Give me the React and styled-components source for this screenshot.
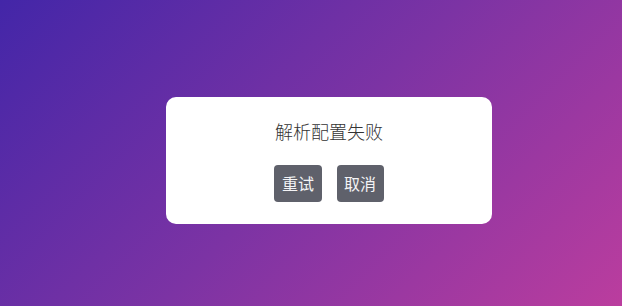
import React from 'react'
import styled, { createGlobalStyle } from 'styled-components'

const GlobalStyle = createGlobalStyle`
  html, body {
    margin: 0;
    padding: 0;
    height: 100%;
  }
  body {
    font-family: "Noto Sans CJK SC", "Noto Sans", sans-serif;
  }
  #root {
    height: 100%;
  }
`

const Backdrop = styled.div`
  box-sizing: border-box;
  width: 100%;
  height: 306px;
  display: flex;
  align-items: center;
  justify-content: center;
  padding: 15px 0 0 36px;
  background: linear-gradient(135deg, #4326a8 0%, #7c33a4 50%, #bb3d9e 100%);
`

const Dialog = styled.div`
  box-sizing: border-box;
  width: 326px;
  padding: 22px 0;
  background: #fff;
  border-radius: 10px;
  display: flex;
  flex-direction: column;
  align-items: center;
`

const Message = styled.div`
  font-size: 18px;
  font-weight: 300;
  line-height: 24px;
  color: #333;
  margin-bottom: 22px;
`

const Actions = styled.div`
  display: flex;
  gap: 15px;
`

const Button = styled.button`
  height: 37px;
  padding: 0 7.5px;
  border: none;
  border-radius: 4px;
  background: #5f616b;
  color: #f4f4f6;
  font-family: inherit;
  font-size: 16px;
  line-height: 37px;
  cursor: pointer;
`

export default function App() {
  return (
    <>
      <GlobalStyle />
      <Backdrop>
        <Dialog>
          <Message>解析配置失败</Message>
          <Actions>
            <Button>重试</Button>
            <Button>取消</Button>
          </Actions>
        </Dialog>
      </Backdrop>
    </>
  )
}
